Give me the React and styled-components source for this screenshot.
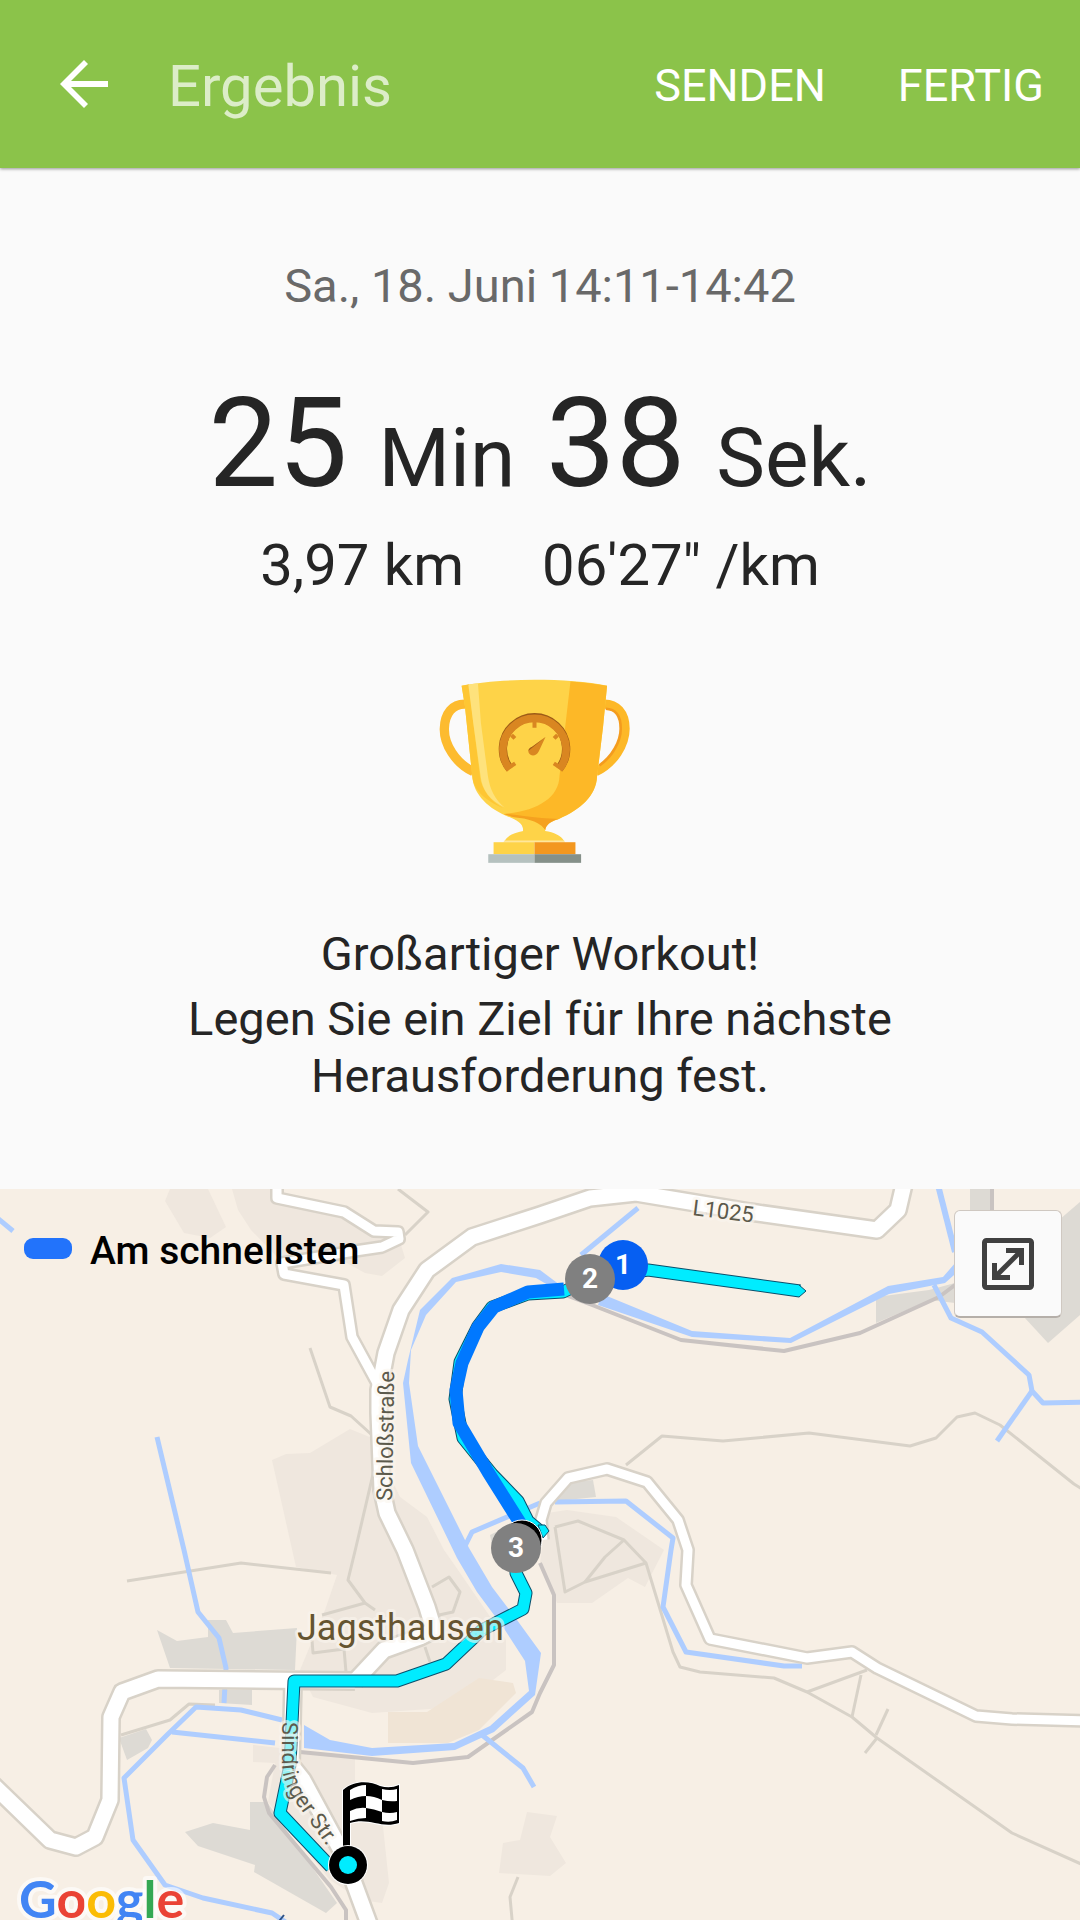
import React from "react";
import styled, { createGlobalStyle } from "styled-components";

const GlobalStyle = createGlobalStyle`
  * {
    box-sizing: border-box;
  }

  body {
    margin: 0;
    background: #fafafa;
    font-family: Roboto, "Noto Sans", sans-serif;
    color: #252525;
  }
`;

const Header = styled.header`
  position: relative;
  display: flex;
  align-items: center;
  height: 168px;
  padding: 0 36px 0 48px;
  background: #8bc34a;
  box-shadow: 0 1px 3px rgba(0, 0, 0, 0.4);
`;

const BackBtn = styled.button`
  display: flex;
  padding: 12px;
  border: 0;
  background: none;
  cursor: pointer;
`;

const Title = styled.h1`
  flex: 1;
  margin: 0 0 0 48px;
  padding-top: 4px;
  font-weight: 400;
  font-size: 58px;
  line-height: 72px;
  color: #dcedc8;
`;

const Actions = styled.nav`
  display: flex;
  gap: 72px;
  padding-top: 4px;
`;

const ActionBtn = styled.button`
  padding: 0;
  border: 0;
  background: none;
  font-family: inherit;
  font-size: 45px;
  line-height: 56px;
  color: #ffffff;
  cursor: pointer;
`;

const Summary = styled.section`
  display: flex;
  flex-direction: column;
  align-items: center;
  padding: 90px 40px 85px;
  text-align: center;
`;

const DateLine = styled.p`
  margin: 0;
  font-size: 47px;
  line-height: 56px;
  color: #696969;
`;

const Duration = styled.p`
  margin: 56px 0 0;
  font-size: 124px;
  line-height: 148px;
`;

const Unit = styled.span`
  font-size: 82px;
  line-height: 1;
`;

const Details = styled.div`
  display: flex;
  gap: 78px;
  margin-top: 11px;
  font-size: 58px;
  line-height: 72px;
`;

const TrophyIcon = styled.svg`
  width: 203px;
  height: 185px;
  margin-top: 78px;
`;

const Message = styled.p`
  max-width: 760px;
  margin: ${(props) => props.$top}px 0 0;
  font-size: 47px;
  line-height: 57px;
`;

const MapSection = styled.section`
  position: relative;
  overflow: hidden;
  background: #f7efe5;
`;

const MapDrawing = styled.svg`
  display: block;
  width: 100%;
  height: auto;
  font-family: Roboto, "Noto Sans", sans-serif;
`;

const Legend = styled.div`
  position: absolute;
  top: 38px;
  left: 24px;
  display: flex;
  align-items: center;
  gap: 18px;
  font-weight: 500;
  font-size: 39px;
  line-height: 48px;
  color: #000000;
`;

const LegendMark = styled.span`
  width: 48px;
  height: 21px;
  margin-bottom: 6px;
  border-radius: 9px;
  background: #2273fb;
`;

const ExpandBtn = styled.button`
  position: absolute;
  top: 21px;
  right: 18px;
  display: flex;
  align-items: center;
  justify-content: center;
  width: 108px;
  height: 108px;
  padding: 0;
  border: 1px solid #cfc8c1;
  border-bottom: 2px solid #b5afa9;
  border-radius: 6px;
  background: #fafafa;
  cursor: pointer;
`;

/////////////////////////////////////////////////////////////////////////

function BackArrow() {
  return (
    <svg width="48" height="48" viewBox="0 0 48 48" fill="#ffffff">
      <path d="M24 0L28 4L11 21H48V27H11L28 44L24 48L0 24Z" />
    </svg>
  );
}

function ExpandArrows() {
  return (
    <svg width="52" height="52" viewBox="0 0 52 52" fill="none" stroke="#404040">
      <rect x="2.5" y="2.5" width="47" height="47" rx="2" strokeWidth="5" />
      <path d="M14 38L38 14" strokeWidth="5" />
      <path d="M24 12.5H39.500V27M12.500 25V39.500H28" strokeWidth="5" />
    </svg>
  );
}

function Trophy() {
  return (
    <TrophyIcon viewBox="55 58 610 555" aria-hidden="true">
      <path
        d="M134 133C96 132 72 160 71 207C70 254 104 310 158 336"
        fill="none"
        stroke="#fdbb2f"
        strokeWidth="28"
      />
      <path
        d="M550 133C588 132 614 160 614 207C614 254 580 310 526 336"
        fill="none"
        stroke="#fdb827"
        strokeWidth="28"
      />
      <path
        d="M556 147C588 148 601 170 601 207C601 246 574 292 537 317"
        fill="none"
        stroke="#f49c1e"
        strokeWidth="8"
      />
      {/* cup */}
      <path
        d="M123 78C240 54 444 54 560 78L548 200L530 350C527 410 480 450 415 478C385 488 374 498 374 514H308C308 496 298 486 270 474C205 450 158 405 155 350L133 140Z"
        fill="#fed348"
      />
      <path
        d="M450 65Q510 69 560 78L548 200L530 350C527 410 480 450 415 478L376 486H310L250 463C350 455 415 415 417 350Z"
        fill="#fdb827"
      />
      <path
        d="M123 78L145 73L158 190L178 350C182 390 210 425 248 446C196 424 158 392 155 350L133 140Z"
        fill="#fec633"
      />
      <path
        d="M143 74L172 70L181 190L202 350C208 390 224 420 252 444C210 424 184 392 180 350L158 190Z"
        fill="#fee27c"
      />
      <path d="M250 463C280 463 330 476 415 478C390 484 375 498 375 511C357 492 300 481 250 463Z" fill="#f5a11f" />
      <path d="M308 514C309 492 300 484 270 472Q360 478 374 514C400 518 422 528 431 544H252C261 527 284 518 308 514Z" fill="#fed348" />
      <path d="M252 543H431L434 549H248Z" fill="#ffe79b" />
      {/* base */}
      <rect x="219" y="548" width="123" height="36" fill="#fed348" />
      <rect x="342" y="548" width="123" height="36" fill="#f3971f" />
      <rect x="203" y="584" width="139" height="26" fill="#b5c1bf" />
      <rect x="342" y="584" width="140" height="26" fill="#859089" />
      {/* speedometer */}
      <path d="M268 327A95 95 0 1 1 416 327" fill="none" stroke="#9d5b17" strokeWidth="25" />
      <path d="M268 329A95 94 0 1 1 416 329" fill="none" stroke="#d98621" strokeWidth="23" />
      <path d="M342 182V204M273 226L283 236M411 226L401 236M267 322L284 311M417 322L400 311" stroke="#d98621" strokeWidth="12" />
      <path d="M375 232L355 275C346 292 330 290 325 280C321 271 326 265 335 261Z" fill="#d98621" />
      <path d="M375 232L335 261C328 264 324 268 324 273Z" fill="#9d5b17" />
    </TrophyIcon>
  );
}

const sideRoads = [
  "277,1180 277,1198 344,1212 374,1231 398,1232 399,1239 382,1247 355,1251 282,1263 284,1274 344,1285 352,1337 377,1383",
  "543,1540 541,1520 546,1503 568,1478 607,1469 647,1482 678,1520 688,1550 686,1585 710,1639 807,1658 852,1652 877,1668 976,1716 1012,1719 1090,1721",
];

const mainRoads = [
  "905,1180 898,1210 877,1230 750,1212 636,1193 590,1198 540,1215 472,1237 427,1270 401,1310 386,1353 379,1390 379,1413 382,1490 387,1513 405,1550 427,1607 434,1630 420,1637 384,1650 355,1681",
  "-10,1782 50,1840 76,1847 95,1837 110,1800 111,1717 122,1692 158,1679 355,1681",
  "293,1681 291,1765 303,1780 344,1856 375,1940",
];

const paths = [
  "398,1189 428,1212 405,1235",
  "310,1348 330,1407 351,1416 372,1435",
  "374,1470 356,1547 348,1580 365,1603 375,1610",
  "127,1581 241,1563 331,1573",
  "322,1615 365,1603",
  "432,1587 449,1577 460,1592 453,1612 439,1615",
  "312,1640 313,1653 344,1649 346,1672",
  "425,1647 430,1662",
  "121,1735 170,1720 189,1704 215,1705",
  "626,1465 662,1436 723,1441 809,1433 910,1446 936,1438 957,1417 975,1413 1000,1425 1074,1484 1090,1494",
  "555,1527 578,1521 624,1540 646,1563 673,1652 680,1667 700,1672 774,1678 807,1692 852,1717 877,1738 1012,1833 1090,1868",
  "555,1527 565,1592 585,1582 646,1563",
  "585,1582 605,1557 624,1540",
  "807,1692 867,1670",
  "861,1675 852,1717",
  "888,1709 876,1735",
  "877,1738 865,1753",
  "518,1877 510,1897 513,1930",
];

const tracks = [
  "560,1293 592,1305 681,1340 784,1351 860,1333 939,1297 955,1285",
  "300,1752 413,1763 468,1757 532,1712 540,1693 554,1665 554,1595 540,1563",
  "275,1765 267,1777 264,1797 269,1813 331,1887 346,1910 346,1930",
];

const streams = [
  "-5,1216 13,1231",
  "157,1437 184,1550 198,1612 219,1638 226,1668 224,1703",
  "638,1208 581,1255",
  "934,1285 951,1318 982,1332 1029,1375 1032,1391 1043,1403 1090,1402",
  "1032,1391 997,1441",
  "465,1546 472,1532 540,1503",
  "555,1502 626,1501 673,1538 671,1550 663,1607 686,1652 784,1666 802,1666",
  "282,1720 241,1710 196,1707 167,1735 124,1778 133,1840 165,1885 203,1898 272,1913 290,1925",
  "172,1732 275,1743",
  "482,1735 523,1768 534,1787",
];

const builtUp = [
  "157,1630 177,1641 208,1637 208,1620 226,1620 233,1633 297,1628 295,1670 170,1668",
  "219,1690 252,1690 252,1705 219,1703",
  "119,1738 146,1729 152,1740 148,1748 127,1760",
  "250,1802 267,1802 337,1903 326,1913 254,1872 255,1865 198,1846 185,1832 213,1823 250,1830",
  "970,1189 994,1189 994,1213 970,1213",
  "1080,1202 1024,1250 1024,1317 1048,1343 1080,1315",
  "876,1297 929,1290 955,1283 955,1303 930,1300 876,1323",
  "564,1483 593,1480 596,1497 557,1501",
  "490,1535 512,1524 515,1550 492,1545",
];

const fields = [
  "170,1189 208,1189 226,1227 210,1238 184,1233 165,1201",
  "232,1189 238,1210 251,1230 282,1262 345,1262 365,1273 382,1276 405,1258 398,1235 344,1212 275,1200 275,1189",
  "272,1460 286,1454 310,1453 350,1429 372,1438 400,1497 427,1517 444,1550 458,1570 506,1640 506,1670 458,1707 372,1713 313,1697 300,1670 325,1610 337,1575 296,1567",
  "253,1745 355,1757 355,1780 382,1817 389,1883 382,1903 361,1900 330,1880 268,1802 275,1763 253,1762",
  "499,1873 503,1843 520,1840 527,1812 557,1816 550,1837 566,1863 550,1876",
  "547,1513 567,1510 616,1517 664,1550 645,1587 628,1578 592,1603 557,1603 540,1563",
];

const route =
  "M800 1291L648 1270L590 1279L563 1292L528 1294L492 1307L478 1326L460 1362L455 1399L463 1438L492 1474L518 1501L528 1521L540 1531L516 1548V1573L526 1593L523 1609L482 1630L446 1664L397 1681H294L290 1765L280 1813L331 1867";

const fastest =
  "M564 1289L528 1292L494 1307L478 1327L462 1363L456 1390L459 1423L488 1472L522 1526";

const markers = [
  { x: 623, y: 1265, number: "1", color: "#065ff2" },
  { x: 590, y: 1279, number: "2", color: "#808080" },
  { x: 516, y: 1548, number: "3", color: "#808080" },
];

function Lines({ list, color, width }) {
  return (
    <g fill="none" stroke={color} strokeWidth={width} strokeLinejoin="round">
      {list.map((points) => (
        <polyline key={points} points={points} />
      ))}
    </g>
  );
}

function Areas({ list, color }) {
  return (
    <g fill={color}>
      {list.map((points) => (
        <polygon key={points} points={points} />
      ))}
    </g>
  );
}

function FinishFlag() {
  return (
    <g>
      <path
        d="M343 1790C356 1779 371 1782 380 1786Q390 1789 399 1785V1823C381 1829 369 1817 350 1823V1850H343Z"
        fill="#000000"
        stroke="#ffffff"
        strokeWidth="2"
        paintOrder="stroke"
      />
      <g fill="#ffffff">
        <path d="M350 1790Q358 1785 366 1785V1796Q358 1796 350 1800Z" />
        <path d="M382 1789Q390 1791 397 1789V1801Q390 1802 382 1800Z" />
        <path d="M366 1796Q374 1796 382 1800V1812Q374 1809 366 1808Z" />
        <path d="M350 1811Q358 1807 366 1808V1818Q358 1818 350 1821Z" />
        <path d="M382 1812Q390 1814 397 1812V1820Q390 1823 382 1821Z" />
      </g>
      <circle cx="348" cy="1865" r="20" fill="#ffffff" />
      <circle cx="348" cy="1865" r="19" fill="#000000" />
      <circle cx="348" cy="1865" r="9" fill="#00ecff" />
    </g>
  );
}

function RouteMap() {
  return (
    <MapDrawing viewBox="0 1189 1080 731" role="img" aria-label="Jagsthausen">
      <Areas list={fields} color="#efe7de" />
      <Areas list={builtUp} color="#dddad4" />
      <polygon
        points="388,1712 427,1712 479,1678 513,1683 516,1693 479,1730 448,1743 388,1743"
        fill="#f0e4d5"
      />
      <Lines list={paths} color="#d8d2c8" width="3" />
      <Lines list={tracks} color="#c9c3c1" width="4" />
      <Lines list={["992,1189 992,1213"]} color="#c9c3c1" width="4" />

      {/* river */}
      <Lines list={streams} color="#aecdff" width="5" />
      <g fill="#aecdff">
        <path d="M602 1294L692 1331L790 1338L888 1286L943 1277L956 1262L962 1268L945 1283L889 1294L791 1343L692 1337L598 1305Z" />
        <path d="M560 1285L540 1270L501 1264L452 1278L420 1310L408 1360L403 1383L411 1463L457 1558L477 1592L503 1627L525 1661L529 1691L490 1726L454 1743L372 1748L330 1740L304 1725V1748L372 1756L455 1750L494 1732L535 1695L541 1653L517 1620L492 1587L469 1548L418 1446L409 1383L411 1350L426 1315L456 1282L501 1272L536 1278L560 1292Z" />
      </g>
      <Lines list={["938,1185 955,1252"]} color="#aecdff" width="6" />

      {/* roads */}
      <Lines list={sideRoads} color="#d8d2c8" width="14" />
      <Lines list={mainRoads} color="#d8d2c8" width="20" />
      <Lines list={sideRoads} color="#ffffff" width="9" />
      <Lines list={mainRoads} color="#ffffff" width="15" />

      <g fill="none" strokeLinejoin="round">
        <path d={route} stroke="#0a4f6c" strokeWidth="13" />
        <path d={route} stroke="#00ecff" strokeWidth="11" />
        <path d="M799 1285L806 1291L799 1297" fill="#00ecff" stroke="#0a4f6c" />
        <path d="M538 1525L545 1525L549 1531L543 1538Z" fill="#00ecff" stroke="#0a4f6c" />
        <path d={fastest} stroke="#0078ff" strokeWidth="13" />
      </g>

      <g fill="#5c5a4c" stroke="rgba(250, 245, 238, 0.6)" strokeWidth="6" strokeLinejoin="round" paintOrder="stroke" fontSize="22">
        <text x="692" y="1215" transform="rotate(7 692 1215)">
          L1025
        </text>
        <text x="392" y="1501" transform="rotate(-89 392 1501)">
          Schloßstraße
        </text>
        <path id="sindringer" d="M282 1722V1765Q283 1785 297 1804L340 1864" fill="none" stroke="none" />
        <text>
          <textPath href="#sindringer">Sindringer Str.</textPath>
        </text>
        <text x="297" y="1640" fontSize="36" fill="#655430">
          Jagsthausen
        </text>
      </g>

      <circle cx="522" cy="1540" r="20" fill="#000000" stroke="#ffffff" strokeWidth="1" />
      {markers.map((marker) => (
        <g key={marker.number}>
          <circle cx={marker.x} cy={marker.y} r="25" fill={marker.color} />
          <text x={marker.x} y={marker.y + 9} fill="#ffffff" fontSize="28" fontWeight="700" textAnchor="middle">
            {marker.number}
          </text>
        </g>
      ))}
      <FinishFlag />

      <path d="M284 1915L276 1925" stroke="#2d5286" strokeWidth="2" />
      <text
        x="19"
        y="1918"
        fontFamily="Lato, sans-serif"
        fontSize="52"
        fontWeight="700"
        stroke="rgba(255, 255, 255, 0.6)"
        strokeWidth="8"
        strokeLinejoin="round"
        paintOrder="stroke"
      >
        <tspan fill="#4285f4">G</tspan>
        <tspan fill="#ea4335">o</tspan>
        <tspan fill="#fbbc05">o</tspan>
        <tspan fill="#4285f4">g</tspan>
        <tspan fill="#34a853">l</tspan>
        <tspan fill="#ea4335">e</tspan>
      </text>
    </MapDrawing>
  );
}

function App() {
  return (
    <div className="App">
      <GlobalStyle />
      <Header>
        <BackBtn aria-label="Zurück">
          <BackArrow />
        </BackBtn>
        <Title>Ergebnis</Title>
        <Actions>
          <ActionBtn>SENDEN</ActionBtn>
          <ActionBtn>FERTIG</ActionBtn>
        </Actions>
      </Header>
      <main>
        <Summary>
          <DateLine>Sa., 18. Juni 14:11-14:42</DateLine>
          <Duration>
            25 <Unit>Min</Unit> 38 <Unit>Sek.</Unit>
          </Duration>
          <Details>
            <span>3,97 km</span>
            <span>06'27" /km</span>
          </Details>
          <Trophy />
          <Message $top={61}>Großartiger Workout!</Message>
          <Message $top={8}>
            Legen Sie ein Ziel für Ihre nächste Herausforderung fest.
          </Message>
        </Summary>
        <MapSection>
          <RouteMap />
          <Legend>
            <LegendMark />
            Am schnellsten
          </Legend>
          <ExpandBtn aria-label="Karte vergrößern">
            <ExpandArrows />
          </ExpandBtn>
        </MapSection>
      </main>
    </div>
  );
}

export default App;
